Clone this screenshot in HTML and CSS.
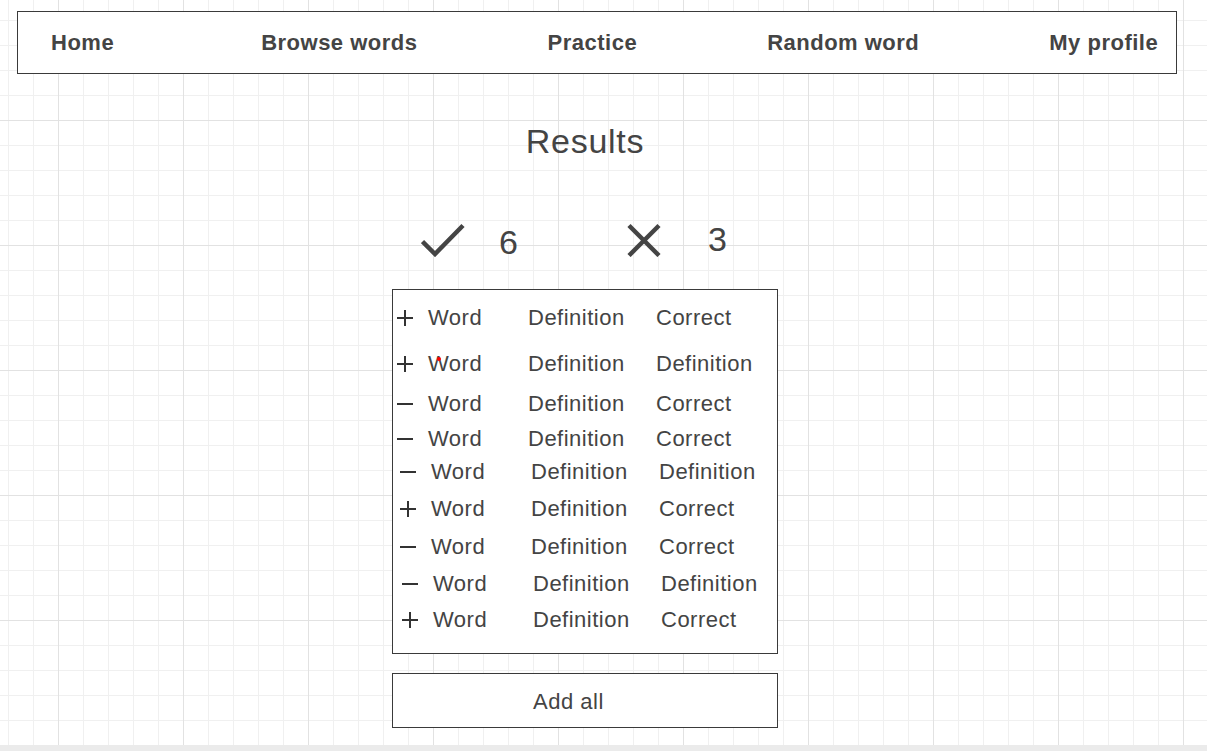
FILE: index.html
```html
<!DOCTYPE html>
<html lang="en">
<head>
<meta charset="utf-8">
<title>Results</title>
<link rel="stylesheet" href="styles.css">
</head>
<body>
<nav class="topnav">
  <a class="nav-item nav-home" href="#">Home</a>
  <a class="nav-item" href="#">Browse words</a>
  <a class="nav-item" href="#">Practice</a>
  <a class="nav-item" href="#">Random word</a>
  <a class="nav-item" href="#">My profile</a>
</nav>

<main class="results">
  <h1 class="title">Results</h1>

  <div class="score">
    <svg class="icon-check" width="44" height="34" viewBox="0 0 44 34">
      <polyline points="1.5,18.5 14,31 42,2.5" fill="none" stroke="#444" stroke-width="4.5"/>
    </svg>
    <span class="count count-right">6</span>
    <svg class="icon-cross" width="36" height="34" viewBox="0 0 36 34">
      <line x1="3" y1="2.5" x2="33" y2="32.5" stroke="#444" stroke-width="4.5"/>
      <line x1="33" y1="2.5" x2="3" y2="32.5" stroke="#444" stroke-width="4.5"/>
    </svg>
    <span class="count count-wrong">3</span>
  </div>

  <div class="word-list">
    <div class="row"><span class="sign plus"></span><span class="c-word">Word</span><span class="c-def">Definition</span><span class="c-ans">Correct</span></div>
    <div class="row"><span class="sign plus"></span><span class="c-word">Word<i class="dot"></i></span><span class="c-def">Definition</span><span class="c-ans">Definition</span></div>
    <div class="row"><span class="sign minus"></span><span class="c-word">Word</span><span class="c-def">Definition</span><span class="c-ans">Correct</span></div>
    <div class="row"><span class="sign minus"></span><span class="c-word">Word</span><span class="c-def">Definition</span><span class="c-ans">Correct</span></div>
    <div class="row"><span class="sign minus"></span><span class="c-word">Word</span><span class="c-def">Definition</span><span class="c-ans">Definition</span></div>
    <div class="row"><span class="sign plus"></span><span class="c-word">Word</span><span class="c-def">Definition</span><span class="c-ans">Correct</span></div>
    <div class="row"><span class="sign minus"></span><span class="c-word">Word</span><span class="c-def">Definition</span><span class="c-ans">Correct</span></div>
    <div class="row"><span class="sign minus"></span><span class="c-word">Word</span><span class="c-def">Definition</span><span class="c-ans">Definition</span></div>
    <div class="row"><span class="sign plus"></span><span class="c-word">Word</span><span class="c-def">Definition</span><span class="c-ans">Correct</span></div>
  </div>

  <button class="add-all" type="button">Add all</button>
</main>
</body>
</html>
```

FILE: styles.css
```css
html {
  background: #ebebeb;
}

body {
  margin: 0;
  height: 745px;
  overflow: hidden;
  font-family: "Liberation Sans", Arial, sans-serif;
  color: #444;
  background-color: #fff;
  background-image:
    linear-gradient(to right, #e2e2e2 1px, transparent 1px),
    linear-gradient(to bottom, #e2e2e2 1px, transparent 1px),
    linear-gradient(to right, #f0f0f0 1px, transparent 1px),
    linear-gradient(to bottom, #f0f0f0 1px, transparent 1px);
  background-size: 125px 125px, 125px 125px, 25px 25px, 25px 25px;
  background-position: 58px 0, 0 120px, 8px 0, 0 20px;
}

/* ---------- top navigation ---------- */
.topnav {
  display: flex;
  align-items: center;
  gap: 130px;
  box-sizing: border-box;
  width: 1160px;
  height: 63px;
  margin: 11px 0 0 17px;
  padding-left: 33px;
  border: 1px solid #3a3a3a;
  background: #fff;
}

.nav-item {
  font-size: 22px;
  font-weight: bold;
  line-height: 26px;
  letter-spacing: 0.5px;
  color: #444;
  text-decoration: none;
  white-space: nowrap;
}

.nav-home {
  margin-right: 17px;
}

/* ---------- results column ---------- */
.results {
  width: 386px;
  margin-left: 392px;
}

.title {
  margin: 47px 0 0;
  font-size: 34px;
  font-weight: normal;
  line-height: 40px;
  letter-spacing: 0.7px;
  text-align: center;
  color: #444;
}

.score {
  display: flex;
  align-items: flex-start;
  height: 43px;
  margin-top: 58px;
}

.icon-check {
  display: block;
  margin: 4px 0 0 29px;
}

.icon-cross {
  display: block;
  margin: 4px 0 0 108px;
}

.count {
  font-size: 34px;
  line-height: 40px;
}

.count-right {
  margin: 3px 0 0 34px;
}

.count-wrong {
  margin: 0 0 0 46px;
}

/* ---------- word list ---------- */
.word-list {
  box-sizing: border-box;
  margin-top: 27px;
  padding-bottom: 20px;
  border: 1px solid #3a3a3a;
  background: #fff;
}

.row {
  display: flex;
  align-items: center;
  height: 26px;
  font-size: 22px;
  line-height: 26px;
  letter-spacing: 0.5px;
  white-space: nowrap;
}

.row:nth-child(1) { margin-top: 15px; }
.row:nth-child(2) { margin-top: 20px; }
.row:nth-child(3) { margin-top: 14px; }
.row:nth-child(4) { margin-top: 9px; }
.row:nth-child(5) { margin-top: 7px; padding-left: 3px; }
.row:nth-child(6) { margin-top: 11px; padding-left: 3px; }
.row:nth-child(7) { margin-top: 12px; padding-left: 3px; }
.row:nth-child(8) { margin-top: 11px; padding-left: 5px; }
.row:nth-child(9) { margin-top: 10px; padding-left: 5px; }

.sign {
  position: relative;
  flex: none;
  width: 16px;
  height: 16px;
  margin: 0 15px 0 4px;
}

.sign::before,
.sign::after {
  content: "";
  position: absolute;
  background: #333;
}

.sign::before {
  left: 0;
  top: 7px;
  width: 16px;
  height: 2px;
}

.plus::after {
  left: 7px;
  top: 0;
  width: 2px;
  height: 16px;
}

.c-word {
  position: relative;
  width: 100px;
}

.c-def {
  width: 128px;
}

.dot {
  position: absolute;
  left: 9px;
  top: 6px;
  width: 4px;
  height: 4px;
  border-radius: 50%;
  background: #f00;
}

/* ---------- add all button ---------- */
.add-all {
  display: block;
  box-sizing: border-box;
  width: 386px;
  height: 55px;
  margin-top: 19px;
  padding: 15px 0 12px 140px;
  border: 1px solid #3a3a3a;
  background: #fff;
  font-family: "Liberation Sans", Arial, sans-serif;
  font-size: 22px;
  line-height: 26px;
  letter-spacing: 0.5px;
  color: #444;
  text-align: left;
  cursor: pointer;
}
```
